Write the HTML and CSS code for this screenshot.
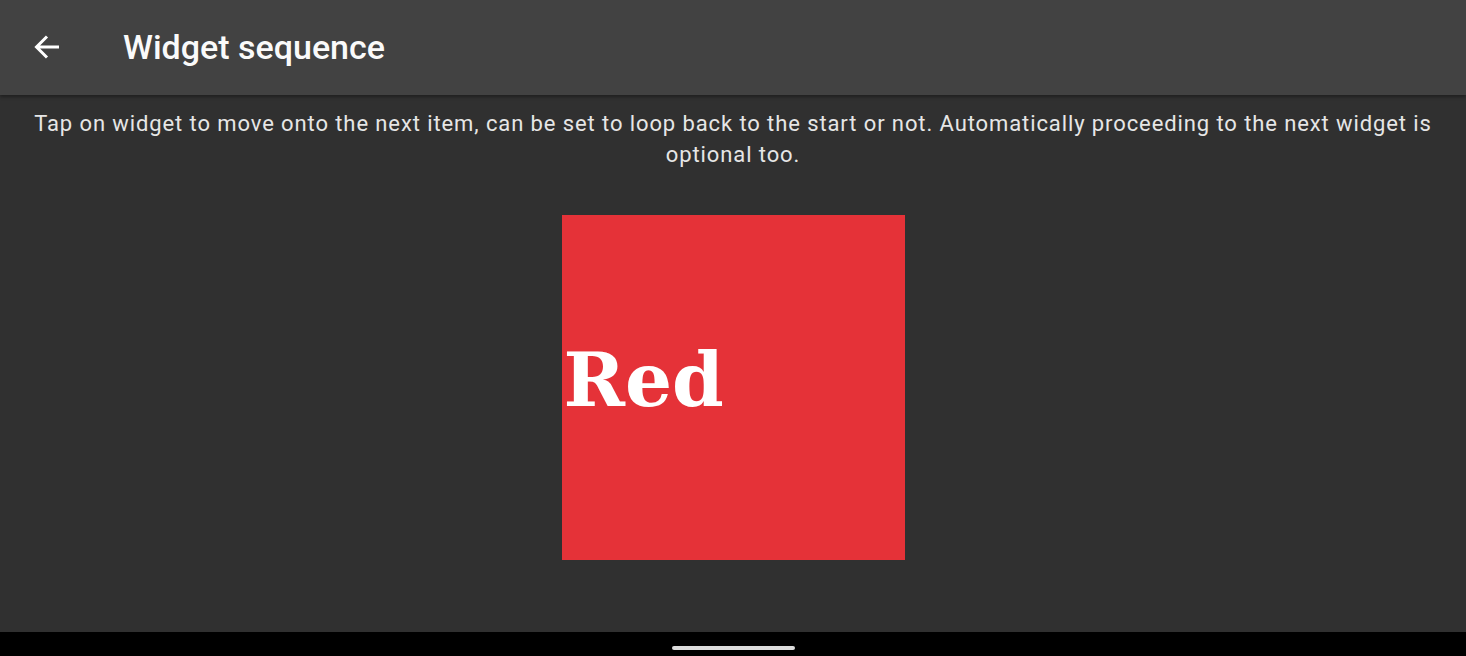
FILE: index.html
```html
<!DOCTYPE html>
<html>
<head>
<meta charset="utf-8">
<link rel="stylesheet" href="styles.css">
</head>
<body>
<div class="screen">
  <header class="appbar">
    <svg class="back" width="28" height="28" viewBox="0 0 28 28">
      <path d="M26 14H4M14 3.5L3.5 14L14 24.5" fill="none" stroke="#fff" stroke-width="3"/>
    </svg>
    <h1 class="title">Widget sequence</h1>
  </header>
  <main class="content">
    <p class="desc">Tap on widget to move onto the next item, can be set to loop back to the start or not. Automatically proceeding to the next widget is optional too.</p>
    <div class="widget">
      <span class="word">Red</span>
    </div>
  </main>
  <footer class="navbar"><div class="handle"></div></footer>
</div>
</body>
</html>
```
FILE: styles.css
```css
html, body { margin: 0; padding: 0; }
body { background: #303030; font-family: Roboto, "Noto Sans", sans-serif; }
.screen { width: 1466px; height: 656px; display: flex; flex-direction: column; overflow: hidden; }
.appbar {
  height: 95px; flex: none; background: #424242;
  display: flex; align-items: center; padding-left: 33px;
  box-shadow: 0 2px 3px rgba(0,0,0,0.35); position: relative; z-index: 1;
}
.back { display: block; margin-top: -1px; }
.title {
  margin: -2px 0 0 62px; color: #fafafa; font-size: 34px; font-weight: 500; letter-spacing: 0;
}
.content { flex: 1; background: #303030; display: flex; flex-direction: column; align-items: center; }
.desc {
  margin: 13px 16px 0; color: #e6e6e6; font-size: 22px; line-height: 31px; text-align: center;
  letter-spacing: 0.9px;
}
.widget {
  margin-top: 45px; width: 343px; height: 345px; background: #e53238;
  display: flex; align-items: flex-start; overflow: hidden;
}
.word {
  margin-top: 128px; margin-left: 2px;
  font-family: "DejaVu Serif", serif; font-weight: bold; color: #fff; font-size: 74px; line-height: 1;
}
.navbar { height: 24px; flex: none; background: #000; display: flex; justify-content: center; }
.handle { margin-top: 14px; width: 123px; height: 4px; background: #dcdcdc; border-radius: 2px; }
```
